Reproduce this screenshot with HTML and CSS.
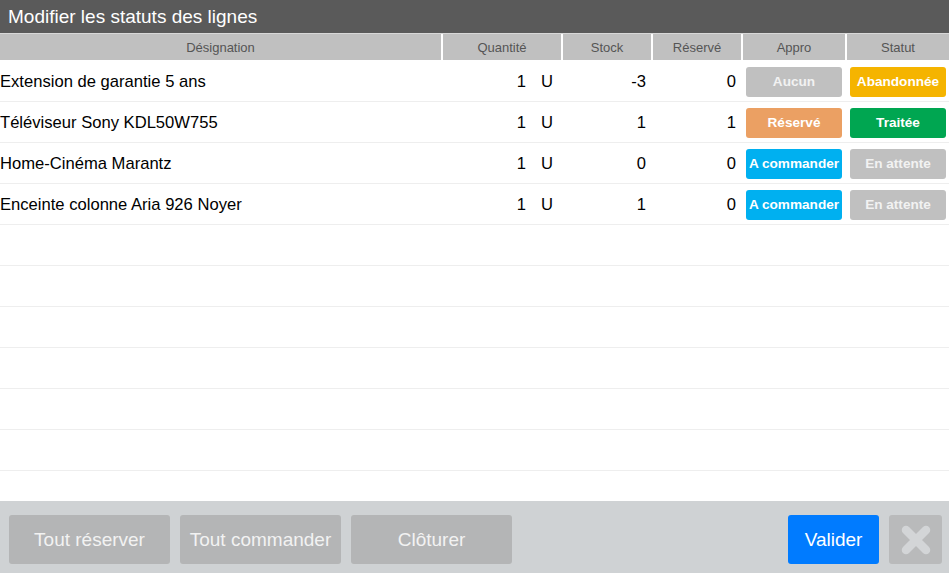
FILE: index.html
```html
<!DOCTYPE html>
<html lang="fr">
<head>
<meta charset="utf-8">
<title>Modifier les statuts des lignes</title>
<link rel="stylesheet" href="styles.css">
</head>
<body>
<div class="app">
  <div class="title">Modifier les statuts des lignes</div>
  <div class="grid head">
    <div class="hc">Désignation</div>
    <div class="hc">Quantité</div>
    <div class="hc">Stock</div>
    <div class="hc">Réservé</div>
    <div class="hc">Appro</div>
    <div class="hc">Statut</div>
  </div>
  <div class="rows">
    <div class="grid row">
      <div class="c des">Extension de garantie 5 ans</div>
      <div class="c qty"><span>1</span><span class="unit">U</span></div>
      <div class="c num">-3</div>
      <div class="c num">0</div>
      <div class="c badge-cell"><span class="badge grey">Aucun</span></div>
      <div class="c badge-cell"><span class="badge yellow">Abandonnée</span></div>
    </div>
    <div class="grid row">
      <div class="c des">Téléviseur Sony KDL50W755</div>
      <div class="c qty"><span>1</span><span class="unit">U</span></div>
      <div class="c num">1</div>
      <div class="c num">1</div>
      <div class="c badge-cell"><span class="badge orange">Réservé</span></div>
      <div class="c badge-cell"><span class="badge green">Traitée</span></div>
    </div>
    <div class="grid row">
      <div class="c des">Home-Cinéma Marantz</div>
      <div class="c qty"><span>1</span><span class="unit">U</span></div>
      <div class="c num">0</div>
      <div class="c num">0</div>
      <div class="c badge-cell"><span class="badge blue">A commander</span></div>
      <div class="c badge-cell"><span class="badge grey light">En attente</span></div>
    </div>
    <div class="grid row">
      <div class="c des">Enceinte colonne Aria 926 Noyer</div>
      <div class="c qty"><span>1</span><span class="unit">U</span></div>
      <div class="c num">1</div>
      <div class="c num">0</div>
      <div class="c badge-cell"><span class="badge blue">A commander</span></div>
      <div class="c badge-cell"><span class="badge grey light">En attente</span></div>
    </div>
    <div class="row empty"></div>
    <div class="row empty"></div>
    <div class="row empty"></div>
    <div class="row empty"></div>
    <div class="row empty"></div>
    <div class="row empty"></div>
  </div>
  <div class="footer">
    <button class="btn muted">Tout réserver</button>
    <button class="btn muted">Tout commander</button>
    <button class="btn muted">Clôturer</button>
    <div class="spacer"></div>
    <button class="btn primary">Valider</button>
    <button class="btn close" aria-label="Fermer">
      <svg width="32" height="30" viewBox="0 0 32 30"><path d="M6 5 L26 25 M26 5 L6 25" stroke="#d3d5d7" stroke-width="8.5" stroke-linecap="round"/></svg>
    </button>
  </div>
</div>
</body>
</html>
```

FILE: styles.css
```css
* { box-sizing: border-box; }
html, body { margin: 0; padding: 0; }
body {
  font-family: "Liberation Sans", Arial, sans-serif;
  background: #ffffff;
  color: #000;
}
.app {
  width: 949px;
  height: 573px;
  display: flex;
  flex-direction: column;
  overflow: hidden;
}
.title {
  height: 33px;
  background: #5a5a5a;
  color: #ffffff;
  font-size: 19px;
  line-height: 33px;
  padding-left: 8px;
}
.grid {
  display: grid;
  grid-template-columns: 441px 118px 88px 88px 102px 102px;
  column-gap: 2px;
}
.head {
  height: 27px;
  background: #ffffff;
  border-top: 1px solid #d8d8d8;
}
.hc {
  background: #c0c0c0;
  color: #555555;
  font-size: 13px;
  display: flex;
  align-items: center;
  justify-content: center;
}
.rows {
  flex: 1;
  overflow: hidden;
  padding-top: 1px;
}
.row {
  height: 41px;
  border-bottom: 1px solid #eeeeee;
}
.c {
  display: flex;
  align-items: center;
  font-size: 16.6px;
  height: 40px;
  padding-top: 2px;
}
.des { padding-left: 0; }
.qty { justify-content: flex-end; }
.unit { width: 20px; margin-left: 15px; }
.num { justify-content: flex-end; padding-right: 5px; }
.badge-cell { justify-content: center; padding-top: 0; }
.badge {
  width: 96px;
  height: 30px;
  border-radius: 3px;
  color: #ffffff;
  font-size: 13.6px;
  font-weight: bold;
  display: flex;
  align-items: center;
  justify-content: center;
  margin-top: 1px;
}
.grey { background: #c0c0c0; color: #f2f2f2; }
.yellow { background: #f5b400; }
.orange { background: #eba063; }
.green { background: #00a651; }
.blue { background: #00b0f0; }
.footer {
  height: 72px;
  background: #cfd2d4;
  display: flex;
  align-items: flex-start;
  gap: 10px;
  padding: 14px 7px 0 9px;
}
.spacer { flex: 1; }
.btn {
  height: 49px;
  border: none;
  border-radius: 3px;
  font-family: "Liberation Sans", Arial, sans-serif;
  font-size: 19px;
  padding: 0;
  display: flex;
  align-items: center;
  justify-content: center;
}
.muted { width: 161px; background: #b4b5b6; color: #f2f2f2; }
.primary { width: 91px; background: #007bff; color: #ffffff; }
.close { width: 53px; background: #b9babb; }
```
